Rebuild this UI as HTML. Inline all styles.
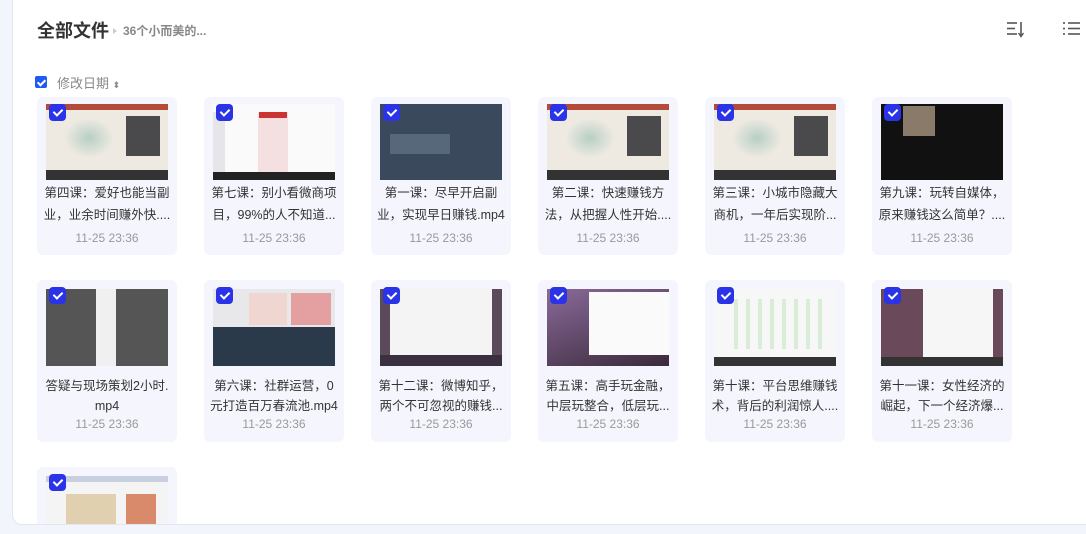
<!DOCTYPE html>
<html><head><meta charset="utf-8"><style>
*{margin:0;padding:0;box-sizing:border-box}
html,body{width:1086px;height:534px;overflow:hidden}
body{background:#f3f5fc;font-family:"Liberation Sans","Noto Sans CJK SC",sans-serif;position:relative}
.panel{position:absolute;left:12px;top:-10px;width:1100px;height:535px;background:#fff;border:1px solid #e3e6ee;border-radius:0 0 0 10px;overflow:hidden}
.clip{position:absolute;left:0;top:0;width:1086px;height:524px;overflow:hidden}
.title{position:absolute;left:37px;top:17px;font-size:18px;font-weight:bold;color:#333}
.crumb{position:absolute;left:113px;top:22px;font-size:12px;color:#888;font-weight:bold}
.crumb:before{content:"";display:inline-block;border-left:4px solid #ccc;border-top:3px solid transparent;border-bottom:3px solid transparent;margin-right:6px;vertical-align:1px}
.cb{position:absolute;left:35px;top:76px;width:12px;height:12px;background:#1f5bf2;border-radius:2px}
.cb:after,.ck:after{content:"";position:absolute;left:3.5px;top:1.5px;width:3px;height:6px;border:solid #fff;border-width:0 2px 2px 0;transform:rotate(45deg)}
.sort{position:absolute;left:57px;top:73px;font-size:13px;color:#888}
.card{position:absolute;width:140px;height:158px;background:#f5f6fd;border-radius:6px}
.th{position:absolute;left:9px;top:7px;width:122px;height:76px;overflow:hidden;background:#ddd}
.ck{position:absolute;left:12px;top:7px;width:17px;height:17px;background:#2a33e8;border-radius:4px;z-index:2}
.ck:after{left:6px;top:3px;width:4px;height:7px}
.nm{position:absolute;left:0;top:85px;width:140px;font-size:12.5px;line-height:22px;color:#333;text-align:center;white-space:nowrap}
.r2 .nm{top:96px;line-height:20px}
.dt{position:absolute;left:0;top:134px;width:140px;text-align:center;font-size:12px;color:#999}
.r2 .dt{top:137px}
.th div{position:absolute}
</style></head><body>
<div class="panel"></div>
<div class="title">全部文件</div>
<div class="crumb">36个小而美的...</div>
<svg style="position:absolute;left:1005px;top:20px" width="22" height="18"><g stroke="#555" stroke-width="1.6"><line x1="2" y1="3" x2="12" y2="3"/><line x1="2" y1="8.5" x2="10" y2="8.5"/><line x1="2" y1="14" x2="12" y2="14"/><line x1="16" y1="2" x2="16" y2="16"/></g><path d="M13.5 13 L16 16.5 L18.5 13" fill="none" stroke="#555" stroke-width="1.4"/></svg>
<svg style="position:absolute;left:1061px;top:20px" width="20" height="18"><g stroke="#555" stroke-width="1.6"><line x1="2" y1="3" x2="4" y2="3"/><line x1="2" y1="8.5" x2="4" y2="8.5"/><line x1="2" y1="14" x2="4" y2="14"/><line x1="7" y1="3" x2="19" y2="3"/><line x1="7" y1="8.5" x2="19" y2="8.5"/><line x1="7" y1="14" x2="19" y2="14"/></g></svg>
<div class="cb"></div>
<div class="sort">修改日期 <span style="font-size:9px;color:#888">⬍</span></div>
<div class="clip">
<div class="card" style="left:37px;top:97px"><div class="th" style="background:linear-gradient(#b34a3a 0 6px,#eeeae2 6px 66px,#333 66px)"><div style="left:80px;top:12px;width:34px;height:40px;background:#4a4a4c"></div><div style="left:18px;top:14px;width:50px;height:40px;background:radial-gradient(#b7cfc4,#eeeae2 70%)"></div></div><div class="ck"></div><div class="nm">第四课：爱好也能当副<br>业，业余时间赚外快....</div><div class="dt">11-25 23:36</div></div>
<div class="card" style="left:204px;top:97px"><div class="th" style="background:linear-gradient(#fafafa 0 68px,#222 68px)"><div style="left:45px;top:8px;width:30px;height:60px;background:#f4e0e0"></div><div style="left:46px;top:8px;width:28px;height:6px;background:#c33"></div><div style="left:0;top:8px;width:12px;height:60px;background:#e6e6ea"></div></div><div class="ck"></div><div class="nm">第七课：别小看微商项<br>目，99%的人不知道...</div><div class="dt">11-25 23:36</div></div>
<div class="card" style="left:371px;top:97px"><div class="th" style="background:#3a4a5c"><div style="left:10px;top:30px;width:60px;height:20px;background:#56687a"></div></div><div class="ck"></div><div class="nm">第一课：尽早开启副<br>业，实现早日赚钱.mp4</div><div class="dt">11-25 23:36</div></div>
<div class="card" style="left:538px;top:97px"><div class="th" style="background:linear-gradient(#b34a3a 0 6px,#eeeae2 6px 66px,#333 66px)"><div style="left:80px;top:12px;width:34px;height:40px;background:#4a4a4c"></div><div style="left:18px;top:14px;width:50px;height:40px;background:radial-gradient(#b7cfc4,#eeeae2 70%)"></div></div><div class="ck"></div><div class="nm">第二课：快速赚钱方<br>法，从把握人性开始....</div><div class="dt">11-25 23:36</div></div>
<div class="card" style="left:705px;top:97px"><div class="th" style="background:linear-gradient(#b34a3a 0 6px,#eeeae2 6px 66px,#333 66px)"><div style="left:80px;top:12px;width:34px;height:40px;background:#4a4a4c"></div><div style="left:18px;top:14px;width:50px;height:40px;background:radial-gradient(#b7cfc4,#eeeae2 70%)"></div></div><div class="ck"></div><div class="nm">第三课：小城市隐藏大<br>商机，一年后实现阶...</div><div class="dt">11-25 23:36</div></div>
<div class="card" style="left:872px;top:97px"><div class="th" style="background:#111"><div style="left:22px;top:2px;width:32px;height:30px;background:#8a7a6a"></div></div><div class="ck"></div><div class="nm">第九课：玩转自媒体，<br>原来赚钱这么简单？....</div><div class="dt">11-25 23:36</div></div>

<div class="card r2" style="left:37px;top:280px;height:162px"><div class="th" style="top:9px;height:77px;background:linear-gradient(90deg,#555 0 50px,#f0f0f0 50px 70px,#555 70px)"></div><div class="ck"></div><div class="nm">答疑与现场策划2小时.<br>mp4</div><div class="dt">11-25 23:36</div></div>
<div class="card r2" style="left:204px;top:280px;height:162px"><div class="th" style="top:9px;height:77px;background:linear-gradient(#e8e8ea 0 38px,#2a3a4a 38px)"><div style="left:78px;top:4px;width:40px;height:32px;background:#e4a0a0"></div><div style="left:36px;top:4px;width:38px;height:32px;background:#f0d6d0"></div></div><div class="ck"></div><div class="nm">第六课：社群运营，0<br>元打造百万春流池.mp4</div><div class="dt">11-25 23:36</div></div>
<div class="card r2" style="left:371px;top:280px;height:162px"><div class="th" style="top:9px;height:77px;background:linear-gradient(90deg,#5a4a5a 0 10px,#f4f4f4 10px 112px,#5a4a5a 112px)"><div style="left:0;top:66px;width:122px;height:11px;background:#3a3040"></div></div><div class="ck"></div><div class="nm">第十二课：微博知乎，<br>两个不可忽视的赚钱...</div><div class="dt">11-25 23:36</div></div>
<div class="card r2" style="left:538px;top:280px;height:162px"><div class="th" style="top:9px;height:77px;background:linear-gradient(160deg,#8a6a9a,#3a2a3a)"><div style="left:42px;top:3px;width:80px;height:63px;background:#fafafa"></div></div><div class="ck"></div><div class="nm">第五课：高手玩金融，<br>中层玩整合，低层玩...</div><div class="dt">11-25 23:36</div></div>
<div class="card r2" style="left:705px;top:280px;height:162px"><div class="th" style="top:9px;height:77px;background:linear-gradient(#f7f7f7 0 68px,#333 68px)"><div style="left:20px;top:10px;width:90px;height:50px;background:repeating-linear-gradient(90deg,#d8ecd8 0 4px,#f7f7f7 4px 12px)"></div></div><div class="ck"></div><div class="nm">第十课：平台思维赚钱<br>术，背后的利润惊人....</div><div class="dt">11-25 23:36</div></div>
<div class="card r2" style="left:872px;top:280px;height:162px"><div class="th" style="top:9px;height:77px;background:linear-gradient(90deg,#6a4a5a 0 42px,#f6f6f6 42px 112px,#6a4a5a 112px)"><div style="left:0;top:68px;width:122px;height:9px;background:#333"></div></div><div class="ck"></div><div class="nm">第十一课：女性经济的<br>崛起，下一个经济爆...</div><div class="dt">11-25 23:36</div></div>

<div class="card" style="left:37px;top:467px;height:80px"><div class="th" style="top:9px;height:70px;background:#f4f4f4"><div style="left:0;top:0;width:122px;height:6px;background:#c8d0e0"></div><div style="left:80px;top:18px;width:30px;height:40px;background:#d88a6a"></div><div style="left:20px;top:18px;width:50px;height:30px;background:#e0d0b0"></div></div><div class="ck"></div></div>
</div>
</body></html>
